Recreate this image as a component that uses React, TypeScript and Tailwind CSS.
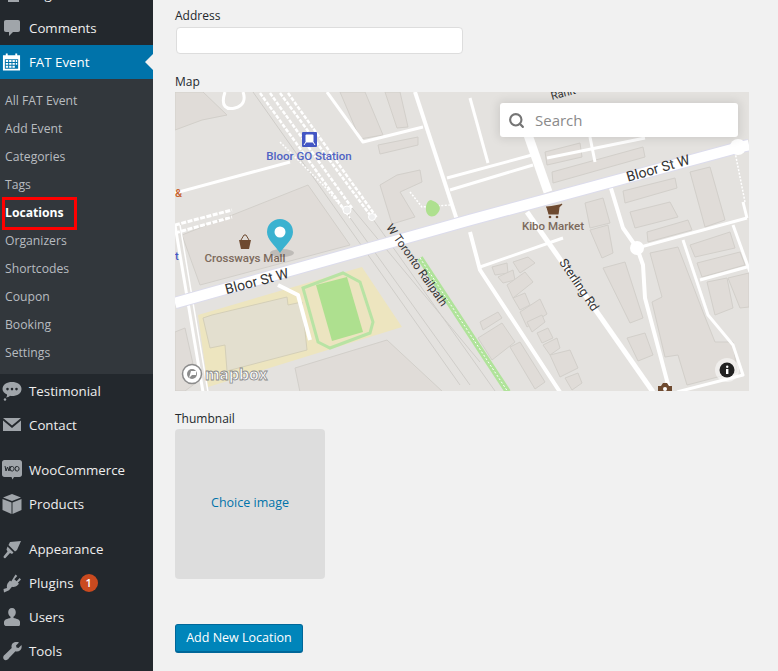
import React from 'react';
import { Search } from 'lucide-react';

const SANS = "font-['Open_Sans','Noto_Sans',sans-serif]";

const iconCls = 'w-5 h-5 fill-[#a0a5aa]';

const PagesIcon = () => (
  <svg viewBox="0 0 20 20" className={iconCls}><path d="M3 2h11v3h3v13H6v-3H3z" /></svg>
);
const CommentIcon = () => (
  <svg viewBox="0 0 20 20" className={iconCls}><path d="M4 2h12c1.500 0 2 .8 2 2v8c0 1.300-.6 2-2 2h-5l-4 4v-4H4c-1.400 0-2-.8-2-2V4c0-1.300.6-2 2-2z" /></svg>
);
const CalendarIcon = () => (
  <svg viewBox="0 0 20 20" className="w-[19px] h-5 fill-white">
    <path fillRule="evenodd" d="M4 1h2v2h8V1h2v2h3v16H1V3h3zM3 7v10h14V7zm1 1h2.500v2H4zm3.500 0H10v2H7.500zM11 8h2.500v2H11zm3.500 0H16v2h-1.500zM4 11h2.500v2H4zm3.500 0H10v2H7.500zm3.500 0h2.500v2H11zm3.500 0H16v2h-1.500zM4 14h2.500v2H4zm3.500 0H10v2H7.500zm3.500 0h2.500v2H11z" />
  </svg>
);
const TestimonialIcon = () => (
  <svg viewBox="0 0 20 20" className={iconCls}>
    <path fillRule="evenodd" d="M10 1c5 0 9.500 2.500 9.500 7S15 15 10 15c-.8 0-1.500 0-2-.2C7 16 5.500 16.500 4 16.500c.8-.8 1.200-1.800 1-3C2.500 12.500.5 10.500.5 8 .5 3.500 5 1 10 1zM5.500 6.800a1.300 1.300 0 100 2.600 1.300 1.300 0 000-2.600zm4.500 0a1.300 1.300 0 100 2.600 1.300 1.300 0 000-2.600zm4.500 0a1.300 1.300 0 100 2.600 1.300 1.300 0 000-2.600z" />
    <circle cx="3" cy="18.500" r="1.200" />
  </svg>
);
const MailIcon = () => (
  <svg viewBox="0 0 20 20" className={iconCls}>
    <path d="M1 3h18L10 10.500zM1 5.500V16h18V5.500l-9 7.500z" />
  </svg>
);
const WooIcon = () => (
  <svg viewBox="0 0 20 20" className={iconCls}>
    <path d="M2.500 0h15C19 0 20 1 20 2.500v12c0 1.500-1 2.500-2.500 2.500H12l-1.500 2.500L9.500 17h-7C1 17 0 16 0 14.500v-12C0 1 1 0 2.500 0z" />
    <path d="M3 6l1 5 1.500-4L7 11l1-5M10.500 6.500a2 2.300 0 100 4.500 2 2.300 0 000-4.500zM15.500 6.500a2 2.300 0 100 4.500 2 2.300 0 000-4.500z" fill="none" stroke="#23282d" strokeWidth="1" />
  </svg>
);
const BoxIcon = () => (
  <svg viewBox="0 0 20 20" className={iconCls}>
    <path d="M10 0l9 3.500L10 7 1 3.500zM.5 5l9 3.500V20L.5 16zM19.500 5v11l-9 4V8.500z" />
  </svg>
);
const BrushIcon = () => (
  <svg viewBox="0 0 20 20" className={iconCls}>
    <path d="M8 3l11-1-4 9-2 1.500-6.500-6.500zM5.500 7.500l6 6-1.500 1.500-2-1-4.500 5c-1 .8-2.500-.4-1.800-1.700L5.500 12.500l-1-2z" />
  </svg>
);
const PlugIcon = () => (
  <svg viewBox="0 0 20 20" className={iconCls}>
    <path d="M13.500 1.500l1.800 1.500-3 3.300 2.300 2 3-3.300L19 6.500l-3.200 3.300 1.200 1-1.500 1.500c-1.500 1.500-3.500 2-5.500 1.500l-3 3.500L2 19.500l-.5-3.500 3.500-1c-.5-2 0-4 1.500-5.700L8 7.500l1.200 1z" />
  </svg>
);
const UserIcon = () => (
  <svg viewBox="0 0 20 20" className={iconCls}>
    <path d="M10 1c2.500 0 3.800 2 3.800 4.300 0 2-1 3.700-2.300 4.400v1.300c3 .8 6.500 1.500 6.500 4v2.500c0 .8-.5 1.500-1.500 1.500H3.500C2.500 18.500 2 17.800 2 17v-2c0-2.500 3.500-3.200 6.500-4V9.700C7.200 9 6.200 7.300 6.200 5.300 6.200 3 7.500 1 10 1z" />
  </svg>
);
const WrenchIcon = () => (
  <svg viewBox="0 0 20 20" className={iconCls}>
    <path d="M17 1.500l-3 3 .5 2 2 .5 3-3c.5 2 0 4-1.300 5.300-1.400 1.200-3.200 1.500-4.700 1L7 17c-1 2-3.500 2.800-5 1.500C.5 17 1.200 14.500 3 13.500l6.700-6.500c-.5-1.500-.2-3.300 1-4.700C12.500.800 15 .8 17 1.500z" />
  </svg>
);

const MenuRow = ({ icon, label, badge }: { icon: React.ReactNode; label: string; badge?: string }) => (
  <div className="flex h-[34px] items-center text-[13.3px] text-[#eeeeee]">
    <div className="flex w-[29px] shrink-0 items-center pl-[2px]">{icon}</div>
    <span className="pt-[2px]">{label}</span>
    {badge && (
      <span className="ml-[6px] flex h-[18px] w-[18px] items-center justify-center rounded-full bg-[#ca4a1f] text-[11px] font-semibold text-white">
        {badge}
      </span>
    )}
  </div>
);

const SUBMENU = ['All FAT Event', 'Add Event', 'Categories', 'Tags', 'Locations', 'Organizers', 'Shortcodes', 'Coupon', 'Booking', 'Settings'];

const Sidebar = () => (
  <aside className="relative z-10 h-[671px] w-[153px] shrink-0 overflow-hidden bg-[#23282d]">
    <div className="-mt-[23px]">
      <MenuRow icon={<PagesIcon />} label="Pages" />
      <MenuRow icon={<CommentIcon />} label="Comments" />
      <div className="relative flex h-[34px] items-center bg-[#0073aa] text-[13.3px] text-white">
        <div className="flex w-[29px] shrink-0 items-center pl-[2px]"><CalendarIcon /></div>
        <span className="pt-[2px]">FAT Event</span>
        <div className="absolute right-0 top-[9px] h-0 w-0 border-y-[8px] border-r-[8px] border-y-transparent border-r-[#f1f1f1]" />
      </div>
      <div className="bg-[#32373c] pb-[7px] pt-[8px]">
        {SUBMENU.map(item => (
          <div
            key={item}
            className={`flex h-[28px] items-center pl-[5px] text-[12.2px] ${item === 'Locations' ? 'font-bold text-white' : 'text-[#b8bcc0]'}`}
          >
            {item}
          </div>
        ))}
      </div>
      <MenuRow icon={<TestimonialIcon />} label="Testimonial" />
      <MenuRow icon={<MailIcon />} label="Contact" />
      <div className="h-[11px]" />
      <MenuRow icon={<WooIcon />} label="WooCommerce" />
      <MenuRow icon={<BoxIcon />} label="Products" />
      <div className="h-[11px]" />
      <MenuRow icon={<BrushIcon />} label="Appearance" />
      <MenuRow icon={<PlugIcon />} label="Plugins" badge="1" />
      <MenuRow icon={<UserIcon />} label="Users" />
      <MenuRow icon={<WrenchIcon />} label="Tools" />
    </div>
    <div className="absolute left-[2px] top-[197px] h-[33px] w-[75px] border-[3px] border-[#ff0000]" />
  </aside>
);

// map shapes, coordinates are px inside the 574x299 map
const BUILDINGS = [
  '7,143 133,93 175,153 25,193',
  '0,38 27,28 52,23 28,0 0,0',
  '165,0 190,0 208,43 185,47',
  '210,0 225,0 233,35 222,36',
  '203,53 243,45 243,53 205,62',
  '205,93 222,83 245,78 247,90 225,100 240,125 217,132',
  '120,276 212,248 268,300 125,300',
  '475,161 503,155 528,220 540,250 558,250 562,280 512,293 503,263 490,265 477,210 487,205',
  '428,176 450,170 468,226 455,231',
  '452,246 470,241 478,263 463,269',
  '410,111 428,106 435,131 415,136',
  '415,138 433,133 438,161 427,166',
  '448,99 500,86 502,96 450,111',
  '455,120 495,110 503,125 460,136',
  '472,140 513,128 517,138 473,150',
  '515,80 535,75 550,128 530,135',
  '515,153 555,140 560,156 520,165',
  '522,171 565,160 570,173 527,185',
  '532,190 552,186 558,216 540,223',
  '553,186 574,181 574,215 565,216',
  '377,80 468,55 470,65 378,91',
  '370,60 405,51 407,65 372,73',
  '303,246 327,231 340,250 317,268',
  '317,175 332,171 333,181 320,183',
  '338,170 353,165 360,171 345,181',
  '323,185 338,178 340,188 328,191',
  '332,193 350,180 358,190 338,206',
  '338,206 350,201 355,213 345,218',
  '345,220 365,207 372,222 352,235',
  '352,230 367,223 370,230 357,240',
  '362,241 373,236 378,246 367,251',
  '368,253 382,246 385,256 375,263',
  '375,263 395,258 403,276 385,285',
  '390,286 403,281 407,291 397,298',
  '305,230 323,220 327,226 308,238',
  '335,255 345,250 370,290 360,297',
  '0,240 10,236 22,290 10,299 0,299',
];

const ROADS: [string, number][] = [
  ['M0 101 L115 70', 3],
  ['M152 0 L188 50 L248 35', 3],
  ['M240 0 L282 128', 4],
  ['M272 86 L357 63', 3],
  ['M275 98 L358 73', 3],
  ['M345 20 L373 100', 9],
  ['M295 6 L313 71', 3],
  ['M352 120 L478 300', 5],
  ['M295 140 L305 178 L385 300', 4],
  ['M305 175 L388 146', 3],
  ['M435 93 L448 136 L462 156 L468 173 L470 206 L495 300', 4],
  ['M462 156 L572 126', 3],
  ['M508 148 L533 223 L558 253 L568 283 L502 300', 3],
  ['M558 133 L575 180', 3],
  ['M525 188 L572 175', 3],
  ['M568 110 L572 126', 3],
  ['M372 66 L470 46', 3],
  ['M415 45 L420 70', 3],
  ['M103 193 L123 203 L135 248', 4],
  ['M0 133 L28 300', 3],
  ['M5 133 L33 300', 1.500],
];

const MapView = () => (
  <div className="relative h-[299px] w-[574px] overflow-hidden bg-[#e4e2df]">
    <svg viewBox="0 0 574 299" className="block h-full w-full" fontFamily="Roboto, 'Noto Sans', sans-serif">
      {BUILDINGS.map(p => (
        <polygon key={p} points={p} fill="#e0dcd8" stroke="#d2cfca" strokeWidth="1" />
      ))}
      <path d="M50 0 C45 15 52 18 60 16 C68 14 71 8 68 0" fill="none" stroke="#fff" strokeWidth="3" />

      {/* park and stadium */}
      <polygon points="23,223 187,175 227,235 33,295" fill="#ede5bf" />
      <polygon points="28,226 37,223 112,205 113,213 127,210 132,258 52,279 50,253 35,256" fill="#e3dfcf" stroke="#d4cfb8" />
      <path d="M128 196 L168 181 L185 190 L198 230 L195 241 L155 256 L143 250 Z" fill="#ece4c0" stroke="#b8e3a4" strokeWidth="3" />
      <polygon points="141,193 172,185 188,240 157,249" fill="#aee08f" />

      {/* railway */}
      <path d="M78 0 L285 293 M168 116 L295 293 M177 116 L305 270 M195 123 L320 299" stroke="#cfcdc9" strokeWidth="1" fill="none" />
      <path d="M85 1 L168 116 M95 1 L177 116 M105 1 L195 123 M113 1 L202 126" stroke="#fff" strokeWidth="2.500" strokeDasharray="4 1.500" fill="none" />
      <path d="M105 50 L150 95 L176 127" stroke="#fff" strokeWidth="1.500" strokeDasharray="2 1.500" fill="none" />
      <circle cx="172" cy="118" r="4" fill="#eeeeee" stroke="#fff" strokeWidth="1" />
      <circle cx="197" cy="125" r="3.500" fill="#eeeeee" stroke="#fff" strokeWidth="1" />
      <path d="M245 166 L333 300" stroke="#b0e39a" strokeWidth="6" fill="none" />
      <path d="M245 166 L333 300" stroke="#fff" strokeWidth="1" strokeDasharray="2 2" fill="none" />
      <path d="M0 133 L57 118 M0 141 L57 125" stroke="#fff" strokeWidth="3" strokeDasharray="5 1.500" fill="none" />
      <path d="M235 100 L247 115 L275 113" stroke="#fff" strokeWidth="1.500" strokeDasharray="2 1.500" fill="none" />
      <path d="M256 108 C262 110 269 115 262 122 C256 128 250 122 251 116 C251 112 253 108 256 108Z" fill="#aee08f" />
      <path d="M560 60 L570 110" stroke="#fff" strokeWidth="1.500" strokeDasharray="2 1.500" fill="none" />

      {/* streets */}
      {ROADS.map(([d, w]) => (
        <path key={d} d={d} fill="none" stroke="#ffffff" strokeWidth={w} strokeLinejoin="round" />
      ))}
      <path d="M0 211 L295 128 L565 55 L574 53" fill="none" stroke="#dcdcec" strokeWidth="12.500" />
      <path d="M0 211 L295 128 L565 55 L574 53" fill="none" stroke="#ffffff" strokeWidth="10.500" />
      <circle cx="462" cy="156" r="7" fill="#fff" />
      <circle cx="563" cy="55" r="8" fill="#fff" />

      {/* labels */}
      <rect x="127" y="40" width="15" height="15" rx="1" fill="#4356c4" />
      <rect x="130.500" y="42.500" width="8" height="8" rx="1" fill="#fff" />
      <path d="M131 50 L129 53 M138 50 L140 53" stroke="#fff" strokeWidth="1" />
      <text x="134" y="68" textAnchor="middle" fontSize="11.500" fontWeight="500" fill="#4f63c4">Bloor GO Station</text>
      <text x="0" y="105" fontSize="11" fontWeight="500" fill="#c8622f">&amp;</text>
      <text x="0" y="168" fontSize="11" fontWeight="500" fill="#4356c4">t</text>
      <path d="M64 148 H76 L74 157 H66 Z" fill="#6e4a30" />
      <path d="M66 148 L69 143 H71 L74 148" fill="none" stroke="#6e4a30" strokeWidth="1" />
      <text x="70" y="170" textAnchor="middle" fontSize="11.500" fontWeight="500" fill="#7c6a5c">Crossways Mall</text>
      <text x="82" y="194" textAnchor="middle" fontSize="14" fill="#333" transform="rotate(-15 82 190)">Bloor St W</text>
      <text x="242" y="177" textAnchor="middle" fontSize="11.500" fill="#333" transform="rotate(55 242 173)">W Toronto Railpath</text>
      <text x="483" y="81" textAnchor="middle" fontSize="14" fill="#333" transform="rotate(-16 483 76)">Bloor St W</text>
      <text x="404" y="197" textAnchor="middle" fontSize="12.500" fill="#333" transform="rotate(56 404 193)">Sterling Rd</text>
      <text x="388" y="5" textAnchor="middle" fontSize="11" fill="#333" transform="rotate(-15 388 1)">Ranit</text>
      <path d="M371 115 H384 L387 112 M372 115 L374 122 H383 L384 115" fill="#6e4a30" stroke="#6e4a30" strokeWidth="1.200" />
      <circle cx="375" cy="125" r="1.300" fill="#6e4a30" />
      <circle cx="382" cy="125" r="1.300" fill="#6e4a30" />
      <text x="378" y="138" textAnchor="middle" fontSize="11.500" fontWeight="500" fill="#7c6a5c">Kibo Market</text>

      {/* marker */}
      <ellipse cx="107" cy="161" rx="12" ry="4" fill="#000" opacity="0.150" />
      <path d="M105 161 C100 153 92 148 92 140 A13 13 0 0 1 118 140 C118 148 110 153 105 161Z" fill="#3bb2d0" />
      <circle cx="105" cy="140" r="5.500" fill="#fff" />

      {/* attribution */}
      <circle cx="17" cy="282" r="9.500" fill="#fff" stroke="#8c8c8c" strokeWidth="1.500" />
      <circle cx="17" cy="282" r="5" fill="#8c8c8c" />
      <path d="M14 286 L16 279 H21 V283 H17Z" fill="#fff" />
      <text x="30" y="288" fontSize="16" fontWeight="700" fill="#fff" stroke="#8c8c8c" strokeWidth="0.800" fontFamily="Inter, sans-serif">mapbox</text>
      <circle cx="552" cy="278" r="12" fill="#fff" opacity="0.500" />
      <circle cx="552" cy="278" r="7.500" fill="#222" />
      <rect x="551" y="277" width="2.400" height="5" fill="#fff" />
      <circle cx="552.200" cy="274.800" r="1.200" fill="#fff" />
      <path d="M483 299 V294 H486 L488 291 H492 L494 294 H497 V299Z" fill="#6e4a30" />
      <circle cx="490" cy="297" r="2" fill="#fff" />
    </svg>
    <div className="absolute left-[325px] top-[11px] flex h-[34px] w-[238px] items-center rounded-[3px] bg-white pl-[8px] shadow-[0_0_10px_2px_rgba(0,0,0,0.1)]">
      <Search className="h-[17px] w-[17px] text-[#757575]" strokeWidth={3} />
      <span className="ml-[10px] text-[15px] text-[#8a8a8a]">Search</span>
    </div>
  </div>
);

export default function App() {
  return (
    <div className={`flex h-[671px] w-[778px] overflow-hidden bg-[#f1f1f1] ${SANS}`}>
      <Sidebar />
      <main className="flex-1 pl-[22px] text-[12px] text-[#23282d]">
        <div className="pt-[7px] leading-[17px]">Address</div>
        <div className="ml-[1px] mt-[3px] h-[27px] w-[287px] rounded-[4px] border border-[#dddddd] bg-white" />
        <div className="mt-[19px] leading-[17px]">Map</div>
        <div className="mt-[2px]">
          <MapView />
        </div>
        <div className="mt-[19px] leading-[17px]">Thumbnail</div>
        <div className="mt-[2px] flex h-[150px] w-[150px] items-center justify-center rounded-[4px] bg-[#dddddd] pb-[2px] text-[12.5px] text-[#0073aa]">
          Choice image
        </div>
        <button className="mt-[45px] flex h-[29px] w-[128px] items-center justify-center rounded-[3px] border border-b-[2px] border-[#006799] bg-[#0085ba] pt-[1px] text-[12.5px] text-white">
          Add New Location
        </button>
      </main>
    </div>
  );
}
